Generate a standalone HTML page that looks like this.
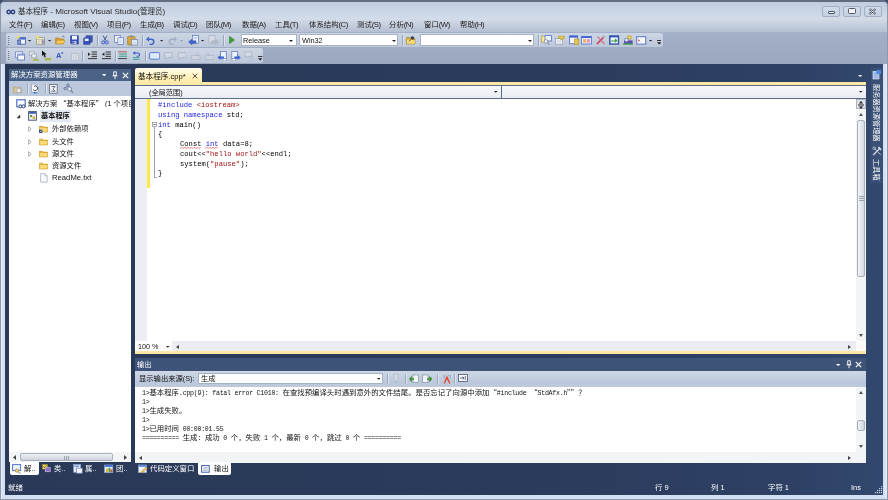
<!DOCTYPE html>
<html><head><meta charset="utf-8"><title>基本程序 - Microsoft Visual Studio(管理员)</title>
<style>
*{box-sizing:border-box;margin:0;padding:0}
html,body{width:888px;height:500px;overflow:hidden;background:#3a4f66}
body{font-family:"Liberation Sans","Noto Sans CJK SC",sans-serif;font-size:8px;color:#1a1a1a;position:relative}
.a{position:absolute}
.t{position:absolute;white-space:nowrap;line-height:1;will-change:transform}
.combo{background:#fff;border:1px solid #a6b1c4}
.mono{font-family:"Liberation Mono","Noto Sans CJK SC",monospace}
.mono i{font-style:normal;font-family:"Noto Sans CJK SC",sans-serif;font-size:7.4px;letter-spacing:0;line-height:0}
.q{font-family:"Noto Sans CJK SC",sans-serif}
.kw{color:#1f1fe8}.st{color:#a31515}
.sb{background:#f3f4f6}
.l{letter-spacing:-.55px;font-size:7.8px}
</style></head><body>
<div class="a " style="left:0px;top:0px;width:888px;height:500px;background:#8f98a8;border-top:2px solid #626d82;border-radius:5px 5px 0 0"></div>
<div class="a " style="left:1px;top:2px;width:885.8px;height:496.7px;background:linear-gradient(#c8d3e5 98.5%,#dbe4f1 99.3%);border-radius:4px 4px 0 0"></div>
<div class="a " style="left:1px;top:2px;width:885.8px;height:17px;background:linear-gradient(#c0cde0,#d2dcea);border-radius:4px 4px 0 0"></div>
<svg class="a" style="left:5.8px;top:8.9px" width="10" height="6" viewBox="0 0 10 6"><circle cx="2.7" cy="3" r="1.7" fill="none" stroke="#2d3f80" stroke-width="1.4"/><circle cx="7" cy="3" r="1.7" fill="none" stroke="#2d3f80" stroke-width="1.4"/></svg>
<div class="t ttl" style="left:18px;top:8.25px;font-size:8.1px;color:#2a2a2a;"><span style="font-size:7.5px">基本程序</span> - Microsoft Visual Studio(<span style="font-size:7.5px">管理员</span>)</div>
<div class="a " style="left:822px;top:6px;width:18px;height:10.7px;border:1px solid #a3afc3;border-radius:2px;background:linear-gradient(#d0dae8,#c4d0e1)"></div>
<div class="a " style="left:842.5px;top:6px;width:18px;height:10.7px;border:1px solid #a3afc3;border-radius:2px;background:linear-gradient(#d0dae8,#c4d0e1)"></div>
<div class="a " style="left:863.5px;top:6px;width:18px;height:10.7px;border:1px solid #a3afc3;border-radius:2px;background:linear-gradient(#d0dae8,#c4d0e1)"></div>
<div class="a " style="left:828px;top:10.5px;width:6.5px;height:3.5px;border:1px solid #4d5563;background:#f4f6f9;border-radius:1px"></div>
<div class="a " style="left:848px;top:8px;width:7.7px;height:6px;border:1px solid #4d5563;background:#f4f6f9;border-radius:1.5px"></div>
<svg class="a" style="left:868px;top:8px" width="9" height="7" viewBox="0 0 9 7"><path d="M1.5 1L7.5 6M7.5 1L1.5 6" stroke="#4d5563" stroke-width="2.2"/><path d="M1.5 1L7.5 6M7.5 1L1.5 6" stroke="#f4f6f9" stroke-width=".8"/></svg>
<div class="a " style="left:1px;top:18.5px;width:885.8px;height:13.5px;background:linear-gradient(#d3dbe7,#b4bfd2)"></div>
<div class="t mn" style="left:9px;top:21.20px;font-size:7.4px;color:#1c1c1c;">文件<span class="l">(F)</span></div>
<div class="t mn" style="left:41px;top:21.20px;font-size:7.4px;color:#1c1c1c;">编辑<span class="l">(E)</span></div>
<div class="t mn" style="left:74px;top:21.20px;font-size:7.4px;color:#1c1c1c;">视图<span class="l">(V)</span></div>
<div class="t mn" style="left:107px;top:21.20px;font-size:7.4px;color:#1c1c1c;">项目<span class="l">(P)</span></div>
<div class="t mn" style="left:140px;top:21.20px;font-size:7.4px;color:#1c1c1c;">生成<span class="l">(B)</span></div>
<div class="t mn" style="left:173px;top:21.20px;font-size:7.4px;color:#1c1c1c;">调试<span class="l">(D)</span></div>
<div class="t mn" style="left:206px;top:21.20px;font-size:7.4px;color:#1c1c1c;">团队<span class="l">(M)</span></div>
<div class="t mn" style="left:242px;top:21.20px;font-size:7.4px;color:#1c1c1c;">数据<span class="l">(A)</span></div>
<div class="t mn" style="left:275px;top:21.20px;font-size:7.4px;color:#1c1c1c;">工具<span class="l">(T)</span></div>
<div class="t mn" style="left:309px;top:21.20px;font-size:7.4px;color:#1c1c1c;">体系结构<span class="l">(C)</span></div>
<div class="t mn" style="left:357px;top:21.20px;font-size:7.4px;color:#1c1c1c;">测试<span class="l">(S)</span></div>
<div class="t mn" style="left:389px;top:21.20px;font-size:7.4px;color:#1c1c1c;">分析<span class="l">(N)</span></div>
<div class="t mn" style="left:424px;top:21.20px;font-size:7.4px;color:#1c1c1c;">窗口<span class="l">(W)</span></div>
<div class="t mn" style="left:460px;top:21.20px;font-size:7.4px;color:#1c1c1c;">帮助<span class="l">(H)</span></div>
<div class="a " style="left:1px;top:32px;width:885.8px;height:32.5px;background:linear-gradient(#a3b0c7,#9aa7bf)"></div>
<div class="a " style="left:5.5px;top:32.7px;width:657px;height:14.6px;background:linear-gradient(#cdd6e4,#bcc7d9);border-radius:2px"></div>
<div class="a " style="left:5.5px;top:48.2px;width:257.5px;height:14.4px;background:linear-gradient(#cdd6e4,#bcc7d9);border-radius:2px"></div>
<svg class="a" style="left:8px;top:35.5px" width="2" height="9" viewBox="0 0 2 9"><rect x="0" y="0" width="1.2" height="1" fill="#6f7c94"/><rect x="0" y="2" width="1.2" height="1" fill="#6f7c94"/><rect x="0" y="4" width="1.2" height="1" fill="#6f7c94"/><rect x="0" y="6" width="1.2" height="1" fill="#6f7c94"/><rect x="0" y="8" width="1.2" height="1" fill="#6f7c94"/></svg>
<svg class="a" style="left:8px;top:51px" width="2" height="9" viewBox="0 0 2 9"><rect x="0" y="0" width="1.2" height="1" fill="#6f7c94"/><rect x="0" y="2" width="1.2" height="1" fill="#6f7c94"/><rect x="0" y="4" width="1.2" height="1" fill="#6f7c94"/><rect x="0" y="6" width="1.2" height="1" fill="#6f7c94"/><rect x="0" y="8" width="1.2" height="1" fill="#6f7c94"/></svg>
<svg class="a" style="left:15.5px;top:35.3px" width="10" height="10" viewBox="0 0 10 10"><rect x="2.6" y="2.6" width="6.8" height="6.6" fill="#f2f5fb" stroke="#4763b5" stroke-width=".9"/><rect x="3" y="3" width="6" height="1.6" fill="#4a6fd8"/><rect x="1.4" y="5.4" width="3.4" height="3.6" fill="#7f97d6" stroke="#3b4f9a" stroke-width=".5"/><path d="M2.2 0L2.9 1.6L4.5 2.2L2.9 2.9L2.2 4.5L1.5 2.9L0 2.2L1.5 1.6Z" fill="#f2e15a"/></svg>
<svg class="a" style="left:27.9px;top:39.7px" width="3.2" height="2.1" viewBox="0 0 3.2 2.1"><path d="M0 0H3.2L1.6 1.6Z" fill="#222"/></svg>
<svg class="a" style="left:35.2px;top:35.3px" width="10" height="10" viewBox="0 0 10 10"><rect x="1.4" y="2.4" width="8" height="6.8" fill="#fbf7dc" stroke="#8f8a74" stroke-width=".7"/><path d="M1.4 4.6H9.4M1.4 6.8H9.4M4 2.4V9.2M6.8 2.4V9.2" stroke="#a9a48a" stroke-width=".5"/><rect x="6.8" y="4.6" width="2.6" height="4.6" fill="#6d5fb0" opacity=".55"/><path d="M2.2 0L2.9 1.6L4.5 2.2L2.9 2.9L2.2 4.5L1.5 2.9L0 2.2L1.5 1.6Z" fill="#f2e15a"/></svg>
<svg class="a" style="left:48.4px;top:39.7px" width="3.2" height="2.1" viewBox="0 0 3.2 2.1"><path d="M0 0H3.2L1.6 1.6Z" fill="#222"/></svg>
<svg class="a" style="left:55.2px;top:35.3px" width="10.5" height="10" viewBox="0 0 10.5 10"><path d="M.6 3H3.8L4.6 4H8.6V8.8H.6Z" fill="#d9a02c" stroke="#a87618" stroke-width=".6"/><path d="M2.2 5.2H10L8.4 8.8H.6Z" fill="#f6c95a" stroke="#b98a24" stroke-width=".5"/><path d="M7 1.6Q8.6 .6 9.6 2.2" stroke="#444" stroke-width=".6" fill="none"/></svg>
<svg class="a" style="left:69.6px;top:35.3px" width="9.5" height="10" viewBox="0 0 9.5 10"><path d="M.6 .8H8.4V9H1.6L.6 8Z" fill="#3550b8" stroke="#263a8c" stroke-width=".6"/><rect x="2" y=".9" width="5" height="3.6" fill="#f4f6fb"/><rect x="2.6" y="6" width="3.8" height="3" fill="#c8d0e8"/><rect x="3.2" y="6.5" width="1.2" height="2" fill="#263a8c"/></svg>
<svg class="a" style="left:83px;top:35.3px" width="10" height="10" viewBox="0 0 10 10"><path d="M3.2 .6H9.4V6.6H3.2Z" fill="#4a64c6" stroke="#263a8c" stroke-width=".5"/><path d="M1.9 2H8.1V8H1.9Z" fill="#4a64c6" stroke="#263a8c" stroke-width=".5"/><path d="M.6 3.4H6.8V9.4H.6Z" fill="#3550b8" stroke="#263a8c" stroke-width=".5"/><rect x="1.8" y="3.6" width="3.8" height="2.4" fill="#eef1f9"/></svg>
<svg class="a" style="left:100.5px;top:35.3px" width="8" height="10" viewBox="0 0 8 10"><path d="M2 .6L5 5.6M6 .6L3 5.6" stroke="#3a4f9a" stroke-width=".9"/><circle cx="2.2" cy="7.4" r="1.5" fill="none" stroke="#3658c8" stroke-width="1"/><circle cx="5.8" cy="7.4" r="1.5" fill="none" stroke="#3658c8" stroke-width="1"/></svg>
<svg class="a" style="left:113.6px;top:35.3px" width="10" height="10" viewBox="0 0 10 10"><rect x=".6" y=".6" width="5.6" height="6.6" fill="#f6f8fc" stroke="#5873c4" stroke-width=".7"/><rect x="3.8" y="2.8" width="5.6" height="6.6" fill="#f6f8fc" stroke="#5873c4" stroke-width=".7"/><path d="M5 5H8.2M5 6.4H8.2M5 7.8H8.2" stroke="#9db0dc" stroke-width=".5"/></svg>
<svg class="a" style="left:127px;top:35.0px" width="11" height="10.5" viewBox="0 0 11 10.5"><rect x=".6" y="1.4" width="7.4" height="8.4" rx=".8" fill="#d9a63a" stroke="#9b7420" stroke-width=".6"/><rect x="2.6" y=".4" width="3.4" height="2" fill="#8a8f9c"/><rect x="4.4" y="4.4" width="5.8" height="5.6" fill="#f6f8fc" stroke="#5f6f9a" stroke-width=".6"/><path d="M5.4 6H9M5.4 7.4H9M5.4 8.8H9" stroke="#9db0dc" stroke-width=".5"/></svg>
<svg class="a" style="left:146px;top:35.8px" width="9" height="9" viewBox="0 0 9 9"><path d="M2 3.2H5.2A2.6 2.6 0 0 1 5.2 8.4H3.4" fill="none" stroke="#3f66d0" stroke-width="1.5"/><path d="M0 3.2L3 .6V5.8Z" fill="#3f66d0"/></svg>
<svg class="a" style="left:159.8px;top:40.2px" width="3.2" height="2.1" viewBox="0 0 3.2 2.1"><path d="M0 0H3.2L1.6 1.6Z" fill="#222"/></svg>
<svg class="a" style="left:168px;top:35.8px" width="9" height="9" viewBox="0 0 9 9"><path d="M7 3.2H3.8A2.6 2.6 0 0 0 3.8 8.4H5.6" fill="none" stroke="#a3adbf" stroke-width="1.4"/><path d="M9 3.2L6 .6V5.8Z" fill="#a3adbf"/></svg>
<svg class="a" style="left:180.4px;top:40.2px" width="3.2" height="2.1" viewBox="0 0 3.2 2.1"><path d="M0 0H3.2L1.6 1.6Z" fill="#8e98ab"/></svg>
<svg class="a" style="left:188px;top:35.0px" width="11.5" height="10.5" viewBox="0 0 11.5 10.5"><rect x="4.4" y=".6" width="6" height="7.6" fill="#eef2fa" stroke="#5b74b8" stroke-width=".7"/><path d="M5.6 2.4H9.2M5.6 3.8H9.2" stroke="#8ea6d6" stroke-width=".5"/><path d="M.4 7L4 4.2V5.8H8V8.2H4V9.8Z" fill="#3f66d0" stroke="#2a469c" stroke-width=".4"/></svg>
<svg class="a" style="left:201.4px;top:40.2px" width="3.2" height="2.1" viewBox="0 0 3.2 2.1"><path d="M0 0H3.2L1.6 1.6Z" fill="#222"/></svg>
<svg class="a" style="left:208px;top:35.0px" width="11.5" height="10.5" viewBox="0 0 11.5 10.5"><rect x="1" y=".6" width="6" height="7.6" fill="#d5dbe6" stroke="#a8b1c2" stroke-width=".7"/><path d="M11.2 7L7.6 4.2V5.8H3.6V8.2H7.6V9.8Z" fill="#b3bccb" stroke="#9ea8ba" stroke-width=".4"/></svg>
<svg class="a" style="left:229px;top:36.0px" width="6" height="8" viewBox="0 0 6 8"><path d="M.4 .2L5.6 4L.4 7.8Z" fill="#3d9a35" stroke="#2c7a28" stroke-width=".4"/></svg>
<svg class="a" style="left:405.8px;top:35.3px" width="10" height="10" viewBox="0 0 10 10"><path d="M.6 2.6H3.8L4.6 3.6H9V9H.6Z" fill="#e2b43a" stroke="#9b7a20" stroke-width=".6"/><path d="M.9 5H8.7V8.7H.9Z" fill="#f7dc78"/><circle cx="6.4" cy="3" r="1.8" fill="#3a3f55"/><path d="M4.6 4.8L3 6.4" stroke="#3a3f55" stroke-width=".9"/></svg>
<svg class="a" style="left:540.5px;top:35.3px" width="11.5" height="10" viewBox="0 0 11.5 10"><rect x=".6" y="1" width="7" height="6" fill="#f7e98a" stroke="#a79a48" stroke-width=".6"/><rect x="4" y=".6" width="6.4" height="5.4" fill="#eef3fb" stroke="#4c74cc" stroke-width=".8"/><circle cx="5" cy="6.4" r="1.8" fill="#f4f7fb" stroke="#6f7d96" stroke-width=".7"/><path d="M6.4 7.8L8.6 9.8" stroke="#6f7d96" stroke-width="1"/></svg>
<svg class="a" style="left:555px;top:35.3px" width="10" height="10" viewBox="0 0 10 10"><rect x=".6" y="3.6" width="7" height="5.6" fill="#f5f7fb" stroke="#8792a8" stroke-width=".6"/><path d="M1.6 5.2H6.4M1.6 6.6H6.4M1.6 8H6.4" stroke="#aeb7c8" stroke-width=".5"/><path d="M3.6 1.2H9.2V3.4H7.4V4.6H5.6V3.4H3.6Z" fill="#f0d04a" stroke="#9b8420" stroke-width=".5"/></svg>
<svg class="a" style="left:568.5px;top:35.3px" width="10.5" height="10" viewBox="0 0 10.5 10"><rect x=".6" y=".8" width="8" height="8" fill="#f3f6fc" stroke="#4c6ccc" stroke-width=".8"/><rect x=".6" y=".8" width="8" height="1.8" fill="#3c5fd0"/><rect x="5.4" y="4" width="4.4" height="5.6" fill="#e8c84a" stroke="#9b8420" stroke-width=".5"/></svg>
<svg class="a" style="left:581px;top:35.3px" width="11" height="10" viewBox="0 0 11 10"><rect x=".6" y="1.4" width="9.8" height="7.6" fill="#e9eefa" stroke="#4c6ccc" stroke-width=".8"/><rect x=".6" y="1.4" width="9.8" height="1.6" fill="#3c5fd0"/><rect x="2" y="4.2" width="3" height="3.4" fill="#f0b45a"/><rect x="5.8" y="4.2" width="3.4" height="3.4" fill="#e99ab0"/></svg>
<svg class="a" style="left:595.5px;top:35.3px" width="10" height="10" viewBox="0 0 10 10"><path d="M1 9L7.6 2.2" stroke="#c8324a" stroke-width="1.4"/><path d="M1.6 1.6L8.6 9" stroke="#d66a86" stroke-width="1.1"/><circle cx="8" cy="1.8" r="1.3" fill="#a8b0c0"/></svg>
<svg class="a" style="left:609px;top:35.3px" width="10.5" height="10" viewBox="0 0 10.5 10"><rect x=".6" y=".8" width="9.2" height="8.4" fill="#2f57c0" stroke="#20408f" stroke-width=".7"/><rect x="1.6" y="2.4" width="7.2" height="6" fill="#f1f4fa"/><path d="M2.2 5.4H6V3.6L8.6 5.6L6 7.8V6.4H2.2Z" fill="#2f9a3a"/></svg>
<svg class="a" style="left:622.5px;top:35.3px" width="10.5" height="10" viewBox="0 0 10.5 10"><rect x="1" y="5.4" width="8.6" height="3.6" fill="#5b4fb0"/><rect x="0" y="8.4" width="10.4" height="1.4" fill="#47a44a"/><circle cx="6.4" cy="2.6" r="2" fill="#f1cf4a" stroke="#9b8420" stroke-width=".5"/><rect x="2" y="3.6" width="3" height="3" fill="#e9eefa" stroke="#4c6ccc" stroke-width=".5"/></svg>
<svg class="a" style="left:636px;top:35.8px" width="10.5" height="9" viewBox="0 0 10.5 9"><rect x=".7" y=".7" width="9" height="7.4" fill="#f6f8fc" stroke="#5a78c6" stroke-width="1"/><path d="M2.4 3L4 4.4L2.4 5.8Z" fill="#d03a3a"/></svg>
<svg class="a" style="left:649.0px;top:39.7px" width="3.2" height="2.1" viewBox="0 0 3.2 2.1"><path d="M0 0H3.2L1.6 1.6Z" fill="#222"/></svg>
<svg class="a" style="left:656.5px;top:40px" width="4.4" height="5" viewBox="0 0 4.4 5"><path d="M0 .5H4.4" stroke="#222" stroke-width=".9"/><path d="M0 2.2H4.4L2.2 4.6Z" fill="#222"/></svg>
<svg class="a" style="left:15px;top:50.8px" width="10" height="10" viewBox="0 0 10 10"><rect x=".6" y=".8" width="7" height="6" fill="#eef3fb" stroke="#6d86c8" stroke-width=".8"/><rect x="2.8" y="3.2" width="6.6" height="5.8" fill="#f7f9fd" stroke="#5670b8" stroke-width=".8"/><rect x="2.8" y="3.2" width="6.6" height="1.4" fill="#7f97d6"/></svg>
<svg class="a" style="left:29px;top:50.8px" width="10" height="10.5" viewBox="0 0 10 10.5"><rect x=".6" y=".8" width="4.6" height="3.8" fill="#e6e9ef" stroke="#8f98a8" stroke-width=".6"/><rect x="2.8" y="3" width="4.6" height="3.8" fill="#e6e9ef" stroke="#8f98a8" stroke-width=".6"/><rect x="4" y="7.8" width="5.6" height="2" fill="#a8b84a"/><path d="M6.4 6.8V7.8" stroke="#8f98a8" stroke-width=".6"/></svg>
<svg class="a" style="left:41px;top:50.3px" width="10.5" height="11" viewBox="0 0 10.5 11"><path d="M1 .4L1 6L2.6 4.8L3.8 7.2L4.9 6.7L3.7 4.4L5.6 4.2Z" fill="#111"/><rect x="4" y="8" width="6.2" height="2.4" fill="#a8b84a"/><path d="M4 8L2.4 6.6" stroke="#555" stroke-width=".5"/></svg>
<div class="t " style="left:56px;top:52.30px;font-size:7.4px;color:#3355c0;font-weight:bold">A</div>
<div class="t " style="left:61.4px;top:50.80px;font-size:6px;color:#3355c0;font-weight:bold">*</div>
<svg class="a" style="left:70px;top:50.8px" width="10" height="10" viewBox="0 0 10 10"><rect x="3" y=".8" width="3.6" height="2" fill="#c9cfda"/><rect x="1.4" y="2.6" width="7" height="6.8" fill="#dde2ea" stroke="#aab2c2" stroke-width=".6"/><path d="M3.4 3.6V8.4M5 3.6V8.4M6.6 3.6V8.4" stroke="#b6bdcb" stroke-width=".6"/></svg>
<svg class="a" style="left:88px;top:51.3px" width="9.5" height="9" viewBox="0 0 9.5 9"><path d="M3.6 1H9M3.6 3.2H9M3.6 5.4H9M0 7.6H9" stroke="#222" stroke-width=".9"/><path d="M0 1.4L2.4 3.2L0 5Z" fill="#222"/></svg>
<svg class="a" style="left:102px;top:51.3px" width="9.5" height="9" viewBox="0 0 9.5 9"><path d="M3.6 1H9M3.6 3.2H9M3.6 5.4H9M0 7.6H9" stroke="#222" stroke-width=".9"/><path d="M2.4 1.4L0 3.2L2.4 5Z" fill="#222"/></svg>
<svg class="a" style="left:118px;top:51.3px" width="9.5" height="9" viewBox="0 0 9.5 9"><path d="M0 .8H9" stroke="#c04a4a" stroke-width=".9"/><path d="M1 3H9M1 5.2H9" stroke="#3aa08a" stroke-width="1.1"/><path d="M0 7.6H9" stroke="#333" stroke-width=".9"/></svg>
<svg class="a" style="left:132px;top:51.3px" width="8.5" height="9" viewBox="0 0 8.5 9"><path d="M3 2H6A1.6 1.6 0 0 1 6 5.2H4.6" fill="none" stroke="#3558c8" stroke-width="1.1"/><path d="M.6 2L3.2 .2V3.8Z" fill="#3558c8"/><path d="M1 6.6H7.6M1 8.4H7.6" stroke="#3aa08a" stroke-width=".9"/></svg>
<svg class="a" style="left:148.5px;top:51.8px" width="11.5" height="8" viewBox="0 0 11.5 8"><rect x=".6" y=".6" width="10.2" height="6.6" rx="1.2" fill="#dfe9fb" stroke="#4a6cc8" stroke-width=".9"/></svg>
<svg class="a" style="left:163px;top:51.8px" width="9.6" height="8.4" viewBox="0 0 9.6 8.4"><g><path d="M1.6 .6H9V5.4H4.6L2.6 7.6V5.4H1.6Z" fill="#d3d9e4" stroke="#a4adbf" stroke-width=".7"/></g></svg>
<svg class="a" style="left:176.7px;top:51.8px" width="9.6" height="8.4" viewBox="0 0 9.6 8.4"><g><path d="M1.6 .6H9V5.4H4.6L2.6 7.6V5.4H1.6Z" fill="#d3d9e4" stroke="#a4adbf" stroke-width=".7"/></g></svg>
<svg class="a" style="left:191px;top:52.3px" width="9.6" height="8" viewBox="0 0 9.6 8"><path d="M.6 3.4H9V7.4H.6Z" fill="#cfd5e0" stroke="#a4adbf" stroke-width=".6"/><path d="M4.6 3.4L7.6 .8" stroke="#a4adbf" stroke-width=".8"/></svg>
<svg class="a" style="left:204.6px;top:52.3px" width="9.6" height="8" viewBox="0 0 9.6 8"><path d="M.6 3.4H9V7.4H.6Z" fill="#cfd5e0" stroke="#a4adbf" stroke-width=".6"/><path d="M5 3.4L2 .8" stroke="#a4adbf" stroke-width=".8"/></svg>
<svg class="a" style="left:217px;top:50.8px" width="10.5" height="10.5" viewBox="0 0 10.5 10.5"><rect x="3.6" y=".6" width="5.6" height="7" fill="#eef2fa" stroke="#5b74b8" stroke-width=".7"/><path d="M.4 6.4L3.6 4V5.4H7V7.6H3.6V9Z" fill="#3f66d0"/><rect x="6" y="7.4" width="3.2" height="2.6" fill="#f4f6fb" stroke="#5b74b8" stroke-width=".5"/></svg>
<svg class="a" style="left:230.5px;top:50.8px" width="10.5" height="10.5" viewBox="0 0 10.5 10.5"><rect x=".8" y=".6" width="5.6" height="7" fill="#eef2fa" stroke="#5b74b8" stroke-width=".7"/><path d="M9.8 6.4L6.6 4V5.4H3.2V7.6H6.6V9Z" fill="#3f66d0"/><rect x="1" y="7.4" width="3.2" height="2.6" fill="#f4f6fb" stroke="#5b74b8" stroke-width=".5"/></svg>
<svg class="a" style="left:244px;top:50.8px" width="10.5" height="10.5" viewBox="0 0 10.5 10.5"><path d="M.8 .8H7.6V5.4H4L2.4 7V5.4H.8Z" fill="#d3d9e4" stroke="#a4adbf" stroke-width=".7"/><path d="M5 5L9.6 9.6M9.6 5L5 9.6" stroke="#b3bccb" stroke-width="1"/></svg>
<svg class="a" style="left:258.3px;top:55.5px" width="4.4" height="5" viewBox="0 0 4.4 5"><path d="M0 .5H4.4" stroke="#222" stroke-width=".9"/><path d="M0 2.2H4.4L2.2 4.6Z" fill="#222"/></svg>
<div class="a combo" style="left:240.5px;top:34.3px;width:56px;height:12px;"></div>
<div class="t " style="left:243px;top:36.85px;font-size:7.3px;color:#111;">Release</div>
<svg class="a" style="left:288.5px;top:39.7px" width="4" height="2.5" viewBox="0 0 4 2.5"><path d="M0 0H4L2 2Z" fill="#222"/></svg>
<div class="a combo" style="left:299px;top:34.3px;width:98.5px;height:12px;"></div>
<div class="t " style="left:302px;top:36.85px;font-size:7.3px;color:#111;">Win32</div>
<svg class="a" style="left:391.5px;top:39.7px" width="4" height="2.5" viewBox="0 0 4 2.5"><path d="M0 0H4L2 2Z" fill="#222"/></svg>
<div class="a combo" style="left:419.5px;top:34.3px;width:114px;height:12px;"></div>
<svg class="a" style="left:527.7px;top:39.7px" width="4" height="2.5" viewBox="0 0 4 2.5"><path d="M0 0H4L2 2Z" fill="#222"/></svg>
<div class="a " style="left:96.6px;top:35px;width:1px;height:11px;background:#98a5bb;box-shadow:1px 0 0 #dbe2ec"></div>
<div class="a " style="left:141.5px;top:35px;width:1px;height:11px;background:#98a5bb;box-shadow:1px 0 0 #dbe2ec"></div>
<div class="a " style="left:222.6px;top:35px;width:1px;height:11px;background:#98a5bb;box-shadow:1px 0 0 #dbe2ec"></div>
<div class="a " style="left:401.7px;top:35px;width:1px;height:11px;background:#98a5bb;box-shadow:1px 0 0 #dbe2ec"></div>
<div class="a " style="left:537.5px;top:35px;width:1px;height:11px;background:#98a5bb;box-shadow:1px 0 0 #dbe2ec"></div>
<div class="a " style="left:82.4px;top:50.5px;width:1px;height:11px;background:#98a5bb;box-shadow:1px 0 0 #dbe2ec"></div>
<div class="a " style="left:115px;top:50.5px;width:1px;height:11px;background:#98a5bb;box-shadow:1px 0 0 #dbe2ec"></div>
<div class="a " style="left:145px;top:50.5px;width:1px;height:11px;background:#98a5bb;box-shadow:1px 0 0 #dbe2ec"></div>
<div class="a " style="left:1px;top:64px;width:885.8px;height:434.7px;background:linear-gradient(90deg,#e4ecf8 0,#d3e0f4 .25%,#d3e0f4 99.7%,#e4ecf8 100%)"></div>
<div class="a " style="left:5px;top:64px;width:877.8px;height:430.8px;background:linear-gradient(90deg,#2a3958 0,#2b3b5b 60%,#2e4165 90%,#33486e 100%)"></div>
<div class="a " style="left:8.5px;top:68.5px;width:122.5px;height:12.2px;background:#4b6286"></div>
<div class="t " style="left:10.5px;top:71.10px;font-size:7.4px;color:#fff;">解决方案资源管理器</div>
<svg class="a" style="left:101.8px;top:73.9px" width="4.4" height="2.7" viewBox="0 0 4.4 2.7"><path d="M0 0H4.4L2.2 2.2Z" fill="#fff"/></svg>
<svg class="a" style="left:111.5px;top:70.5px" width="6" height="9" viewBox="0 0 6 9"><path d="M1.7 .8H4.3V4.6H1.7Z" fill="none" stroke="#fff" stroke-width=".9"/><path d="M.6 4.8H5.4M3 4.8V8.2" stroke="#fff" stroke-width=".9"/></svg>
<svg class="a" style="left:121.5px;top:71.5px" width="7" height="7" viewBox="0 0 7 7"><path d="M.8 .8L6.2 6.2M6.2 .8L.8 6.2" stroke="#fff" stroke-width="1.1"/></svg>
<div class="a " style="left:8.5px;top:80.7px;width:122.5px;height:15.6px;background:#bcc8db"></div>
<div class="a " style="left:8.5px;top:96.3px;width:122.5px;height:356px;background:#fff"></div>
<div class="a sb" style="left:8.5px;top:452.2px;width:122.5px;height:10px;"></div>
<div class="a " style="left:20.3px;top:453.2px;width:93px;height:8px;background:linear-gradient(#eef0f3,#cfd4dc);border:1px solid #a9b0bd;border-radius:2px"></div>
<svg class="a" style="left:64px;top:455.5px" width="6" height="4" viewBox="0 0 6 4"><path d="M.5 0V4M2.5 0V4M4.5 0V4" stroke="#7d8696" stroke-width=".7"/></svg>
<svg class="a" style="left:12.5px;top:455px" width="3" height="5" viewBox="0 0 3 5"><path d="M3 0L0 2.5L3 5Z" fill="#444"/></svg>
<svg class="a" style="left:123.5px;top:455px" width="3" height="5" viewBox="0 0 3 5"><path d="M0 0L3 2.5L0 5Z" fill="#444"/></svg>
<div class="t " style="left:28.4px;top:99.75px;font-size:7.3px;color:#111;width:102.6px;overflow:hidden">解决方案 <span class="q">“</span>基本程序<span class="q">”</span> (1 个项目</div>
<div class="a " style="left:39.5px;top:110.2px;width:31.5px;height:11.8px;background:#e4e8f0"></div>
<div class="t " style="left:41px;top:112.40px;font-size:7.2px;color:#111;font-weight:bold">基本程序</div>
<div class="t " style="left:52px;top:125.05px;font-size:7.3px;color:#111;">外部依赖项</div>
<div class="t " style="left:52px;top:137.65px;font-size:7.3px;color:#111;">头文件</div>
<div class="t " style="left:52px;top:149.75px;font-size:7.3px;color:#111;">源文件</div>
<div class="t " style="left:52px;top:162.05px;font-size:7.3px;color:#111;">资源文件</div>
<div class="t " style="left:52px;top:174.15px;font-size:7.7px;color:#111;">ReadMe.txt</div>
<svg class="a" style="left:15.5px;top:114px" width="5" height="5" viewBox="0 0 5 5"><path d="M4.2 .5V4.2H.5Z" fill="#333"/></svg>
<svg class="a" style="left:28px;top:126.19999999999999px" width="4" height="6" viewBox="0 0 4 6"><path d="M.6 .6L3.2 3L.6 5.4Z" fill="#fff" stroke="#8c8c8c" stroke-width=".7"/></svg>
<svg class="a" style="left:28px;top:138.8px" width="4" height="6" viewBox="0 0 4 6"><path d="M.6 .6L3.2 3L.6 5.4Z" fill="#fff" stroke="#8c8c8c" stroke-width=".7"/></svg>
<svg class="a" style="left:28px;top:150.9px" width="4" height="6" viewBox="0 0 4 6"><path d="M.6 .6L3.2 3L.6 5.4Z" fill="#fff" stroke="#8c8c8c" stroke-width=".7"/></svg>
<svg class="a" style="left:15.5px;top:98.5px" width="10" height="10" viewBox="0 0 10 10"><rect x=".8" y=".8" width="8.4" height="7" fill="#fff" stroke="#3f62c0" stroke-width="1.1"/><circle cx="4.3" cy="7.3" r="1.5" fill="#fff" stroke="#2d3f80" stroke-width="1"/><circle cx="7.5" cy="7.3" r="1.5" fill="#fff" stroke="#2d3f80" stroke-width="1"/></svg>
<svg class="a" style="left:28.4px;top:111px" width="9" height="10" viewBox="0 0 9 10"><rect x=".6" y=".6" width="7.8" height="8.6" fill="#f4f6fa" stroke="#4a5a78" stroke-width="1"/><rect x="1.2" y="1" width="6.6" height="1.8" fill="#3d5fb3"/><rect x="2" y="4" width="2.2" height="2.2" fill="#6b9a3a"/><rect x="4.6" y="5.4" width="2.4" height="2.6" fill="#d7b43a"/></svg>
<svg class="a" style="left:39.4px;top:124px" width="9.5" height="9.5" viewBox="0 0 9.5 9.5"><path d="M.5 2.2H3.6L4.4 3.1H8.6V8H.5Z" fill="#e9b738" stroke="#c4932a" stroke-width=".6"/><path d="M.9 4H8.2V7.6H.9Z" fill="#f9d978"/><rect x="0" y="5.6" width="3.4" height="3.4" fill="#3c4f8a"/><path d="M.8 8.2L2.6 6.4" stroke="#fff" stroke-width=".7"/></svg>
<svg class="a" style="left:39.4px;top:136.6px" width="9.5" height="9.5" viewBox="0 0 9.5 9.5"><path d="M.5 2.2H3.6L4.4 3.1H8.6V8H.5Z" fill="#e9b738" stroke="#c4932a" stroke-width=".6"/><path d="M.9 4H8.2V7.6H.9Z" fill="#f9d978"/></svg>
<svg class="a" style="left:39.4px;top:148.7px" width="9.5" height="9.5" viewBox="0 0 9.5 9.5"><path d="M.5 2.2H3.6L4.4 3.1H8.6V8H.5Z" fill="#e9b738" stroke="#c4932a" stroke-width=".6"/><path d="M.9 4H8.2V7.6H.9Z" fill="#f9d978"/></svg>
<svg class="a" style="left:39.4px;top:161px" width="9.5" height="9.5" viewBox="0 0 9.5 9.5"><path d="M.5 2.2H3.6L4.4 3.1H8.6V8H.5Z" fill="#e9b738" stroke="#c4932a" stroke-width=".6"/><path d="M.9 4H8.2V7.6H.9Z" fill="#f9d978"/></svg>
<svg class="a" style="left:40.4px;top:172.8px" width="8" height="10" viewBox="0 0 8 10"><path d="M.6 .6H5L7.2 2.8V9.2H.6Z" fill="#f7f8fa" stroke="#a2a8b3" stroke-width=".7"/><path d="M5 .6V2.8H7.2" fill="none" stroke="#a2a8b3" stroke-width=".6"/></svg>
<svg class="a" style="left:13px;top:83.5px" width="10" height="10" viewBox="0 0 10 10"><path d="M.6 3H3.6L4.3 3.8H8.6V8.8H.6Z" fill="#d9c79a" stroke="#a9986a" stroke-width=".6"/><rect x="4" y="4.8" width="3.6" height="3.6" fill="#eef2f8" stroke="#8d9bb5" stroke-width=".5"/></svg>
<svg class="a" style="left:30px;top:83px" width="10" height="11" viewBox="0 0 10 11"><path d="M1.6 1H6L8.2 3.2V9.6H1.6Z" fill="#f7f9fc" stroke="#8d9bb5" stroke-width=".7"/><path d="M4 3.2A2.4 2.4 0 1 1 3.2 6.6" fill="none" stroke="#3b4558" stroke-width="1"/><rect x="3.6" y="9" width="3" height="1.4" fill="#3d6fd0"/></svg>
<div class="a " style="left:26.8px;top:83px;width:1px;height:11px;background:#9ba8be;box-shadow:1px 0 0 #dfe5ee"></div>
<div class="a " style="left:44.7px;top:83px;width:1px;height:11px;background:#9ba8be;box-shadow:1px 0 0 #dfe5ee"></div>
<svg class="a" style="left:49px;top:83.5px" width="9" height="10" viewBox="0 0 9 10"><rect x=".6" y=".6" width="7.6" height="8.6" fill="#f4f6fa" stroke="#5a6478" stroke-width=".8"/><path d="M2.4 2.6H6.2L3.9 4.9L6.2 7.2H2.4" fill="none" stroke="#3b4558" stroke-width=".8"/></svg>
<svg class="a" style="left:62.5px;top:83px" width="11" height="11" viewBox="0 0 11 11"><circle cx="5" cy="2.2" r="1.3" fill="none" stroke="#4a5a88" stroke-width=".7"/><circle cx="2.2" cy="5.6" r="1.2" fill="none" stroke="#4a5a88" stroke-width=".7"/><path d="M4.4 3.2L2.8 4.6" stroke="#4a5a88" stroke-width=".6"/><circle cx="6.6" cy="6" r="2" fill="#e8eef8" stroke="#6d7a96" stroke-width=".8"/><path d="M8 7.6L10 9.8" stroke="#6d7a96" stroke-width="1.1"/></svg>
<div class="a " style="left:135px;top:68.3px;width:67.2px;height:16px;background:linear-gradient(#fffdf0,#ffefb5 60%,#ffe8a6);border-radius:2px 2px 0 0"></div>
<div class="t " style="left:137.5px;top:72.50px;font-size:7.6px;color:#111;">基本程序.cpp*</div>
<svg class="a" style="left:191.8px;top:73.2px" width="6" height="6" viewBox="0 0 6 6"><path d="M.7 .7L5.3 5.3M5.3 .7L.7 5.3" stroke="#3a3a3a" stroke-width=".9"/></svg>
<div class="a " style="left:135px;top:82.2px;width:731px;height:2.6px;background:#ffe8a6"></div>
<svg class="a" style="left:857.5999999999999px;top:74.7px" width="4.4" height="2.7" viewBox="0 0 4.4 2.7"><path d="M0 0H4.4L2.2 2.2Z" fill="#dfe5ef"/></svg>
<div class="a " style="left:135px;top:84.8px;width:731px;height:14.4px;background:#5c6b86"></div>
<div class="a " style="left:135px;top:85.8px;width:366px;height:12.2px;background:linear-gradient(#f7f8fb,#e8ecf3)"></div>
<div class="a " style="left:501.6px;top:85.8px;width:364.4px;height:12.2px;background:linear-gradient(#f7f8fb,#e8ecf3)"></div>
<div class="t " style="left:149px;top:88.70px;font-size:7.2px;color:#111;">(全局范围)</div>
<svg class="a" style="left:494.2px;top:91.39999999999999px" width="3.6" height="2.3" viewBox="0 0 3.6 2.3"><path d="M0 0H3.6L1.8 1.8Z" fill="#222"/></svg>
<svg class="a" style="left:858.7px;top:91.39999999999999px" width="3.6" height="2.3" viewBox="0 0 3.6 2.3"><path d="M0 0H3.6L1.8 1.8Z" fill="#222"/></svg>
<div class="a " style="left:135px;top:99.2px;width:731px;height:242.2px;background:#fff"></div>
<div class="a " style="left:135px;top:99.2px;width:11.8px;height:242.2px;background:#eceef3"></div>
<div class="a " style="left:146.8px;top:99.2px;width:3.3px;height:88.8px;background:#ffe84a"></div>
<div class="a sb" style="left:856px;top:99.2px;width:10px;height:242.2px;"></div>
<div class="a " style="left:856px;top:99.2px;width:10px;height:10px;background:#dfe3ea;border:1px solid #aab2c0"></div>
<svg class="a" style="left:858px;top:100.5px" width="6" height="8" viewBox="0 0 6 8"><path d="M3 0L5.2 2.4H.8ZM3 8L5.2 5.6H.8Z" fill="#222"/><path d="M0 4H6" stroke="#222" stroke-width="1"/></svg>
<svg class="a" style="left:859.2px;top:112.5px" width="4" height="3" viewBox="0 0 4 3"><path d="M2 0L4 3H0Z" fill="#555"/></svg>
<svg class="a" style="left:859.2px;top:333.5px" width="4" height="3" viewBox="0 0 4 3"><path d="M2 3L4 0H0Z" fill="#555"/></svg>
<div class="a " style="left:857px;top:120px;width:8.3px;height:157px;background:linear-gradient(90deg,#f3f4f7,#d6dae1);border:1px solid #aab1be;border-radius:2px"></div>
<svg class="a" style="left:859px;top:195.5px" width="5" height="6" viewBox="0 0 5 6"><path d="M0 .5H5M0 2.5H5M0 4.5H5" stroke="#7d8696" stroke-width=".7"/></svg>
<div class="a " style="left:135px;top:341.4px;width:731px;height:10px;background:#ebedf2"></div>
<div class="a " style="left:135px;top:341.4px;width:37px;height:10px;background:#fff"></div>
<div class="t " style="left:138px;top:343.20px;font-size:7.2px;color:#111;">100 %</div>
<svg class="a" style="left:166.2px;top:346.1px" width="3.6" height="2.3" viewBox="0 0 3.6 2.3"><path d="M0 0H3.6L1.8 1.8Z" fill="#222"/></svg>
<svg class="a" style="left:176px;top:345px" width="3" height="4" viewBox="0 0 3 4"><path d="M3 0L0 2L3 4Z" fill="#444"/></svg>
<svg class="a" style="left:848.3px;top:344.5px" width="3" height="4" viewBox="0 0 3 4"><path d="M0 0L3 2L0 4Z" fill="#444"/></svg>
<div class="a " style="left:856px;top:341.4px;width:10px;height:10px;background:#fbfbfc"></div>
<div class="a " style="left:135px;top:351.3px;width:731px;height:2.4px;background:#ffe8a6"></div>
<div class="t mono" style="left:158.2px;top:101.82px;font-size:7.17px;color:#000;"><span class="kw">#include</span> <span class="st">&lt;iostream&gt;</span></div>
<div class="t mono" style="left:158.2px;top:111.72px;font-size:7.17px;color:#000;"><span class="kw">using</span> <span class="kw">namespace</span> std;</div>
<div class="t mono" style="left:158.2px;top:121.52px;font-size:7.17px;color:#000;"><span class="kw">int</span> main()</div>
<div class="t mono" style="left:158.2px;top:131.22px;font-size:7.17px;color:#000;">{</div>
<div class="t mono" style="left:179.6px;top:140.91px;font-size:7.17px;color:#000;">Const <span class="kw">int</span> data=8;</div>
<div class="t mono" style="left:179.6px;top:150.91px;font-size:7.17px;color:#000;">cout&lt;&lt;<span class="st">"hello world"</span>&lt;&lt;endl;</div>
<div class="t mono" style="left:179.6px;top:160.72px;font-size:7.17px;color:#000;">system(<span class="st">"pause"</span>);</div>
<div class="t mono" style="left:158.2px;top:170.41px;font-size:7.17px;color:#000;">}</div>
<svg class="a" style="left:179.5px;top:147.2px" width="21.3" height="2" viewBox="0 0 21.3 2"><path d="M0 1.4L1.6 0.3L3.2 1.4L4.8 0.3L6.4 1.4L8.0 0.3L9.6 1.4L11.2 0.3L12.8 1.4L14.4 0.3L16.0 1.4L17.6 0.3L19.2 1.4L20.8 0.3" fill="none" stroke="#e03030" stroke-width=".6"/></svg>
<svg class="a" style="left:205px;top:147.2px" width="12.8" height="2" viewBox="0 0 12.8 2"><path d="M0 1.4L1.6 0.3L3.2 1.4L4.8 0.3L6.4 1.4L8.0 0.3L9.6 1.4L11.2 0.3L12.8 1.4" fill="none" stroke="#e03030" stroke-width=".6"/></svg>
<svg class="a" style="left:152px;top:121.7px" width="5" height="5" viewBox="0 0 5 5"><rect x=".4" y=".4" width="4.2" height="4.2" fill="#fff" stroke="#8a8a8a" stroke-width=".7"/><path d="M1.3 2.5H3.7" stroke="#444" stroke-width=".7"/></svg>
<div class="a " style="left:154.2px;top:126.7px;width:0.8px;height:50.5px;background:#a5a5a5"></div>
<div class="a " style="left:154.2px;top:176.6px;width:3px;height:0.8px;background:#a5a5a5"></div>
<div class="a " style="left:135px;top:358.3px;width:731px;height:12.3px;background:#3e5378"></div>
<div class="t " style="left:136.5px;top:361.25px;font-size:7.3px;color:#fff;">输出</div>
<svg class="a" style="left:836.4px;top:363.59999999999997px" width="4.4" height="2.7" viewBox="0 0 4.4 2.7"><path d="M0 0H4.4L2.2 2.2Z" fill="#fff"/></svg>
<svg class="a" style="left:846.3px;top:360px" width="6" height="9" viewBox="0 0 6 9"><path d="M1.7 .8H4.3V4.6H1.7Z" fill="none" stroke="#fff" stroke-width=".9"/><path d="M.6 4.8H5.4M3 4.8V8.2" stroke="#fff" stroke-width=".9"/></svg>
<svg class="a" style="left:855.4px;top:361px" width="7" height="7" viewBox="0 0 7 7"><path d="M.8 .8L6.2 6.2M6.2 .8L.8 6.2" stroke="#fff" stroke-width="1.1"/></svg>
<div class="a " style="left:135px;top:370.5px;width:731px;height:16px;background:linear-gradient(#ced7e5,#bcc8db 70%)"></div>
<div class="t " style="left:139px;top:374.85px;font-size:7.3px;color:#111;">显示输出来源(S):</div>
<div class="a combo" style="left:198px;top:372.8px;width:184.5px;height:11.6px;"></div>
<div class="t " style="left:200.8px;top:374.95px;font-size:7.3px;color:#111;">生成</div>
<svg class="a" style="left:376.7px;top:377.90000000000003px" width="3.6" height="2.3" viewBox="0 0 3.6 2.3"><path d="M0 0H3.6L1.8 1.8Z" fill="#222"/></svg>
<div class="a " style="left:135px;top:386.5px;width:731px;height:66px;background:#fff"></div>
<div class="a sb" style="left:856px;top:386.5px;width:10px;height:66px;"></div>
<svg class="a" style="left:859.2px;top:391px" width="4" height="3" viewBox="0 0 4 3"><path d="M2 0L4 3H0Z" fill="#555"/></svg>
<svg class="a" style="left:859.2px;top:445px" width="4" height="3" viewBox="0 0 4 3"><path d="M2 3L4 0H0Z" fill="#555"/></svg>
<div class="a " style="left:857px;top:419.5px;width:8.3px;height:11px;background:linear-gradient(90deg,#f0f2f5,#cfd4dc);border:1px solid #a9b0bd;border-radius:2px"></div>
<div class="a sb" style="left:135px;top:452.4px;width:731px;height:10.5px;"></div>
<svg class="a" style="left:138.5px;top:455.7px" width="3" height="4" viewBox="0 0 3 4"><path d="M3 0L0 2L3 4Z" fill="#444"/></svg>
<svg class="a" style="left:848px;top:455.7px" width="3" height="4" viewBox="0 0 3 4"><path d="M0 0L3 2L0 4Z" fill="#444"/></svg>
<div class="t mono" style="left:141.5px;top:390.80px;font-size:6.6px;color:#111;letter-spacing:-.26px">1&gt;<i>基本程序</i>.cpp(9): fatal error C1010: <i>在查找预编译头时遇到意外的文件结尾。是否忘记了向源中添加“</i>#include <i>“</i>StdAfx.h<i>””？</i></div>
<div class="t mono" style="left:141.5px;top:399.90px;font-size:6.6px;color:#111;letter-spacing:-.26px">1&gt;</div>
<div class="t mono" style="left:141.5px;top:409.10px;font-size:6.6px;color:#111;letter-spacing:-.26px">1&gt;<i>生成失败。</i></div>
<div class="t mono" style="left:141.5px;top:418.20px;font-size:6.6px;color:#111;letter-spacing:-.26px">1&gt;</div>
<div class="t mono" style="left:141.5px;top:427.30px;font-size:6.6px;color:#111;letter-spacing:-.26px">1&gt;<i>已用时间</i> 00:00:01.55</div>
<div class="t mono" style="left:141.5px;top:436.40px;font-size:6.6px;color:#111;letter-spacing:-.26px">========== <i>生成</i>: <i>成功</i> 0 <i>个，失败</i> 1 <i>个，最新</i> 0 <i>个，跳过</i> 0 <i>个</i> ==========</div>
<div class="a " style="left:386.9px;top:373.5px;width:1px;height:10px;background:#9ba8be;box-shadow:1px 0 0 #dfe5ee"></div>
<svg class="a" style="left:391.8px;top:373px" width="8" height="11" viewBox="0 0 8 11"><path d="M2 1H6V6L5 8H3L2 6Z" fill="#d4dae4" stroke="#a9b2c2" stroke-width=".6"/><path d="M3 8.5H5V10H3Z" fill="#a9b2c2"/></svg>
<div class="a " style="left:404.7px;top:373.5px;width:1px;height:10px;background:#9ba8be;box-shadow:1px 0 0 #dfe5ee"></div>
<svg class="a" style="left:409.3px;top:373.5px" width="10" height="10" viewBox="0 0 10 10"><rect x="4" y="1" width="5.4" height="7.4" fill="#f2f5f9" stroke="#7b879b" stroke-width=".6"/><path d="M.6 5H5M.6 5L3 2.6M.6 5L3 7.4" stroke="#3c8a2e" stroke-width="1.3" fill="none"/></svg>
<svg class="a" style="left:422px;top:373.5px" width="11" height="10" viewBox="0 0 11 10"><rect x=".6" y="1" width="5.4" height="7.4" fill="#f2f5f9" stroke="#7b879b" stroke-width=".6"/><path d="M5 5H9.6M9.6 5L7.2 2.6M9.6 5L7.2 7.4" stroke="#3c8a2e" stroke-width="1.3" fill="none"/></svg>
<div class="a " style="left:436.7px;top:373.5px;width:1px;height:10px;background:#9ba8be;box-shadow:1px 0 0 #dfe5ee"></div>
<svg class="a" style="left:442px;top:373.5px" width="10" height="10" viewBox="0 0 10 10"><path d="M1 2H4M1 3.6H3M6 1.6H9M7 3.2H9" stroke="#8a93a6" stroke-width=".6"/><path d="M2.2 9.4L5 3.2L7.8 9.4M3 6.6L5 5L7 6.6" stroke="#e0492e" stroke-width="1.3" fill="none"/></svg>
<div class="a " style="left:454.4px;top:373.5px;width:1px;height:10px;background:#9ba8be;box-shadow:1px 0 0 #dfe5ee"></div>
<svg class="a" style="left:458.3px;top:374.2px" width="10" height="8" viewBox="0 0 10 8"><rect x=".5" y=".5" width="9" height="7" fill="#f6f8fb" stroke="#4e5870" stroke-width=".8"/><path d="M2 4H6M6 4L4.6 2.8M6 4L4.6 5.2" stroke="#2b3350" stroke-width=".7" fill="none"/><path d="M7.3 2V6" stroke="#2b3350" stroke-width=".7"/></svg>
<div class="a " style="left:9.5px;top:462.2px;width:29.5px;height:13px;background:#fff;border-radius:0 0 2px 2px"></div>
<div class="a " style="left:198px;top:461.5px;width:33px;height:13.7px;background:#fff;border-radius:0 0 2px 2px"></div>
<div class="t " style="left:24.3px;top:464.90px;font-size:7.4px;color:#111;">解..</div>
<div class="t " style="left:54px;top:464.90px;font-size:7.4px;color:#fff;">类..</div>
<div class="t " style="left:85px;top:464.90px;font-size:7.4px;color:#fff;">属..</div>
<div class="t " style="left:116px;top:464.90px;font-size:7.4px;color:#fff;">团..</div>
<div class="t " style="left:150px;top:464.90px;font-size:7.4px;color:#fff;">代码定义窗口</div>
<div class="t " style="left:213.5px;top:464.90px;font-size:7.4px;color:#111;">输出</div>
<svg class="a" style="left:12px;top:464px" width="10" height="10" viewBox="0 0 10 10"><rect x=".6" y=".6" width="8" height="6" fill="#eef3fb" stroke="#4a78d0" stroke-width="1"/><circle cx="5" cy="6.6" r="1.7" fill="#f5d36a" stroke="#8c7a3a" stroke-width=".6"/><path d="M6.3 7.9L8.6 9.6" stroke="#6d7a96" stroke-width="1"/></svg>
<svg class="a" style="left:42px;top:464px" width="10" height="10" viewBox="0 0 10 10"><rect x=".5" y=".5" width="5" height="4.6" fill="#f2d24c" stroke="#a58a24" stroke-width=".5"/><rect x="3.2" y="3.4" width="5" height="4.4" fill="#8e6fd0" stroke="#d9d2f0" stroke-width=".5"/><path d="M1.4 2.6L2.6 3.8L4.6 1.4" stroke="#2f6a28" stroke-width=".8" fill="none"/></svg>
<svg class="a" style="left:73px;top:464px" width="10" height="10" viewBox="0 0 10 10"><rect x=".6" y=".6" width="7" height="7.6" fill="#dfe8f7" stroke="#8ea6d6" stroke-width=".7"/><rect x="3.6" y="4.2" width="5.6" height="5" fill="#f3f6fb" stroke="#6f87bd" stroke-width=".7"/><rect x="1.4" y="1.6" width="4.6" height="1.2" fill="#5b83d6"/></svg>
<svg class="a" style="left:104px;top:464px" width="10" height="10" viewBox="0 0 10 10"><rect x=".6" y="1" width="8.2" height="7.6" fill="#e9effa" stroke="#8ea6d6" stroke-width=".7"/><rect x=".6" y="1" width="8.2" height="2" fill="#4c7be0"/><rect x="2" y="4.6" width="2" height="3.6" fill="#d9b13a"/><rect x="4.6" y="3.8" width="2" height="4.4" fill="#4e9a3a"/><rect x="6.8" y="5.4" width="1.6" height="2.8" fill="#d24a3a"/></svg>
<svg class="a" style="left:137.8px;top:464px" width="10" height="10" viewBox="0 0 10 10"><rect x=".6" y="1" width="8" height="7.6" fill="#eef2fa" stroke="#9db0d9" stroke-width=".7"/><rect x=".6" y="1" width="8" height="1.8" fill="#5b83d6"/><path d="M3.4 7.6L8 3L9.2 4.2L4.6 8.8L3 9Z" fill="#f0c64a" stroke="#8c7a3a" stroke-width=".4"/></svg>
<svg class="a" style="left:201px;top:464.5px" width="9" height="8" viewBox="0 0 9 8"><rect x=".6" y=".6" width="7.6" height="6.6" fill="#fff" stroke="#3e5ea8" stroke-width="1"/><path d="M2.2 2.6H6.6M2.2 4H6.6M2.2 5.4H6.6" stroke="#6c88c6" stroke-width=".6"/></svg>
<div class="t " style="left:7.6px;top:484.10px;font-size:7.4px;color:#fff;">就绪</div>
<div class="t " style="left:655px;top:484.10px;font-size:7.4px;color:#fff;">行 9</div>
<div class="t " style="left:711px;top:484.10px;font-size:7.4px;color:#fff;">列 1</div>
<div class="t " style="left:768px;top:484.10px;font-size:7.4px;color:#fff;">字符 1</div>
<div class="t " style="left:851px;top:484.10px;font-size:7.4px;color:#fff;">Ins</div>
<svg class="a" style="left:874.6px;top:486.4px" width="8" height="8" viewBox="0 0 8 8"><rect x="6" y="0" width="1.2" height="1.2" fill="#c3cfe3"/><rect x="4" y="2" width="1.2" height="1.2" fill="#c3cfe3"/><rect x="6" y="2" width="1.2" height="1.2" fill="#c3cfe3"/><rect x="2" y="4" width="1.2" height="1.2" fill="#c3cfe3"/><rect x="4" y="4" width="1.2" height="1.2" fill="#c3cfe3"/><rect x="6" y="4" width="1.2" height="1.2" fill="#c3cfe3"/><rect x="0" y="6" width="1.2" height="1.2" fill="#c3cfe3"/><rect x="2" y="6" width="1.2" height="1.2" fill="#c3cfe3"/><rect x="4" y="6" width="1.2" height="1.2" fill="#c3cfe3"/><rect x="6" y="6" width="1.2" height="1.2" fill="#c3cfe3"/></svg>
<div class="a " style="left:870.6px;top:68.4px;width:12.2px;height:114.6px;background:#3a5075"></div>
<div class="t" style="left:873.1px;top:83.8px;font-size:7.2px;color:#fff;writing-mode:vertical-rl;text-orientation:sideways">服务器资源管理器</div>
<div class="t" style="left:873.1px;top:158.6px;font-size:7.2px;color:#fff;writing-mode:vertical-rl;text-orientation:sideways">工具箱</div>
<svg class="a" style="left:872px;top:70px" width="10" height="10" viewBox="0 0 10 10"><rect x="1" y="1.5" width="6" height="7.5" fill="#9db8e6" stroke="#e8eefb" stroke-width=".6"/><rect x="4.5" y="0" width="4.5" height="4" fill="#4f86e0"/></svg>
<svg class="a" style="left:872px;top:145.5px" width="10" height="10" viewBox="0 0 10 10"><path d="M1.2 9L7.6 2.6" stroke="#d8dfec" stroke-width="1.2"/><path d="M6.4 1.2L9 3.8" stroke="#d8dfec" stroke-width="1.8"/><path d="M2.4 2.4L8.6 8.8" stroke="#b9c6dc" stroke-width="1"/><circle cx="2.2" cy="2.2" r="1.3" fill="none" stroke="#b9c6dc" stroke-width=".8"/></svg>
</body></html>
